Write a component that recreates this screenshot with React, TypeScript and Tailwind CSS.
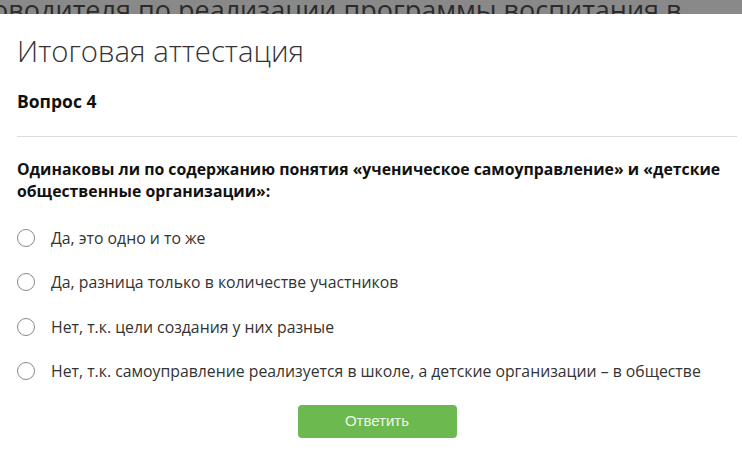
const options = [
  'Да, это одно и то же',
  'Да, разница только в количестве участников',
  'Нет, т.к. цели создания у них разные',
  'Нет, т.к. самоуправление реализуется в школе, а детские организации – в обществе',
];

function Radio() {
  return (
    <span className="inline-block h-[18px] w-[18px] shrink-0 rounded-full border-[1.5px] border-[#8a8a8a] bg-white" />
  );
}

export default function App() {
  return (
    <div className="min-h-[459px] w-[742px] bg-white font-['Open_Sans',sans-serif] text-[#222]">
      {/* page behind the modal, dimmed by the overlay */}
      <div className="h-[14px] overflow-hidden bg-[#898989]">
        <p className="-mt-[4.5px] -ml-[52px] whitespace-nowrap text-[27px] leading-none text-[#2b2b2b]">
          руководителя по реализации программы воспитания в
        </p>
      </div>

      <div className="px-[17px] pt-[17px]">
        <h1 className="text-[29.3px] leading-[40px] font-light text-[#333]">Итоговая аттестация</h1>
        <h2 className="mt-[18px] text-[17.5px] leading-[24px] font-bold text-[#111]">Вопрос 4</h2>
        <div className="mt-[23px] h-px w-[720px] bg-[#dcdcdc]" />

        <p className="mt-[20.5px] text-[15.8px] leading-[22px] font-bold text-[#111]">
          Одинаковы ли по содержанию понятия «ученическое самоуправление» и «детские общественные
          организации»:
        </p>

        <ul className="mt-[25px] flex flex-col gap-[22.67px]">
          {options.map((o) => (
            <li key={o} className="flex h-[22px] items-center gap-[16px]">
              <Radio />
              <span className="text-[15.8px] leading-[22px] text-[#333]">{o}</span>
            </li>
          ))}
        </ul>

        <div className="mt-[22.5px] flex w-[720px] justify-center">
          <button className="h-[33px] w-[159px] rounded-[4px] bg-[#6cb94f] font-['Liberation_Sans',Arial,sans-serif] text-[15px] text-[#eef7e9]">
            Ответить
          </button>
        </div>
      </div>
    </div>
  );
}
